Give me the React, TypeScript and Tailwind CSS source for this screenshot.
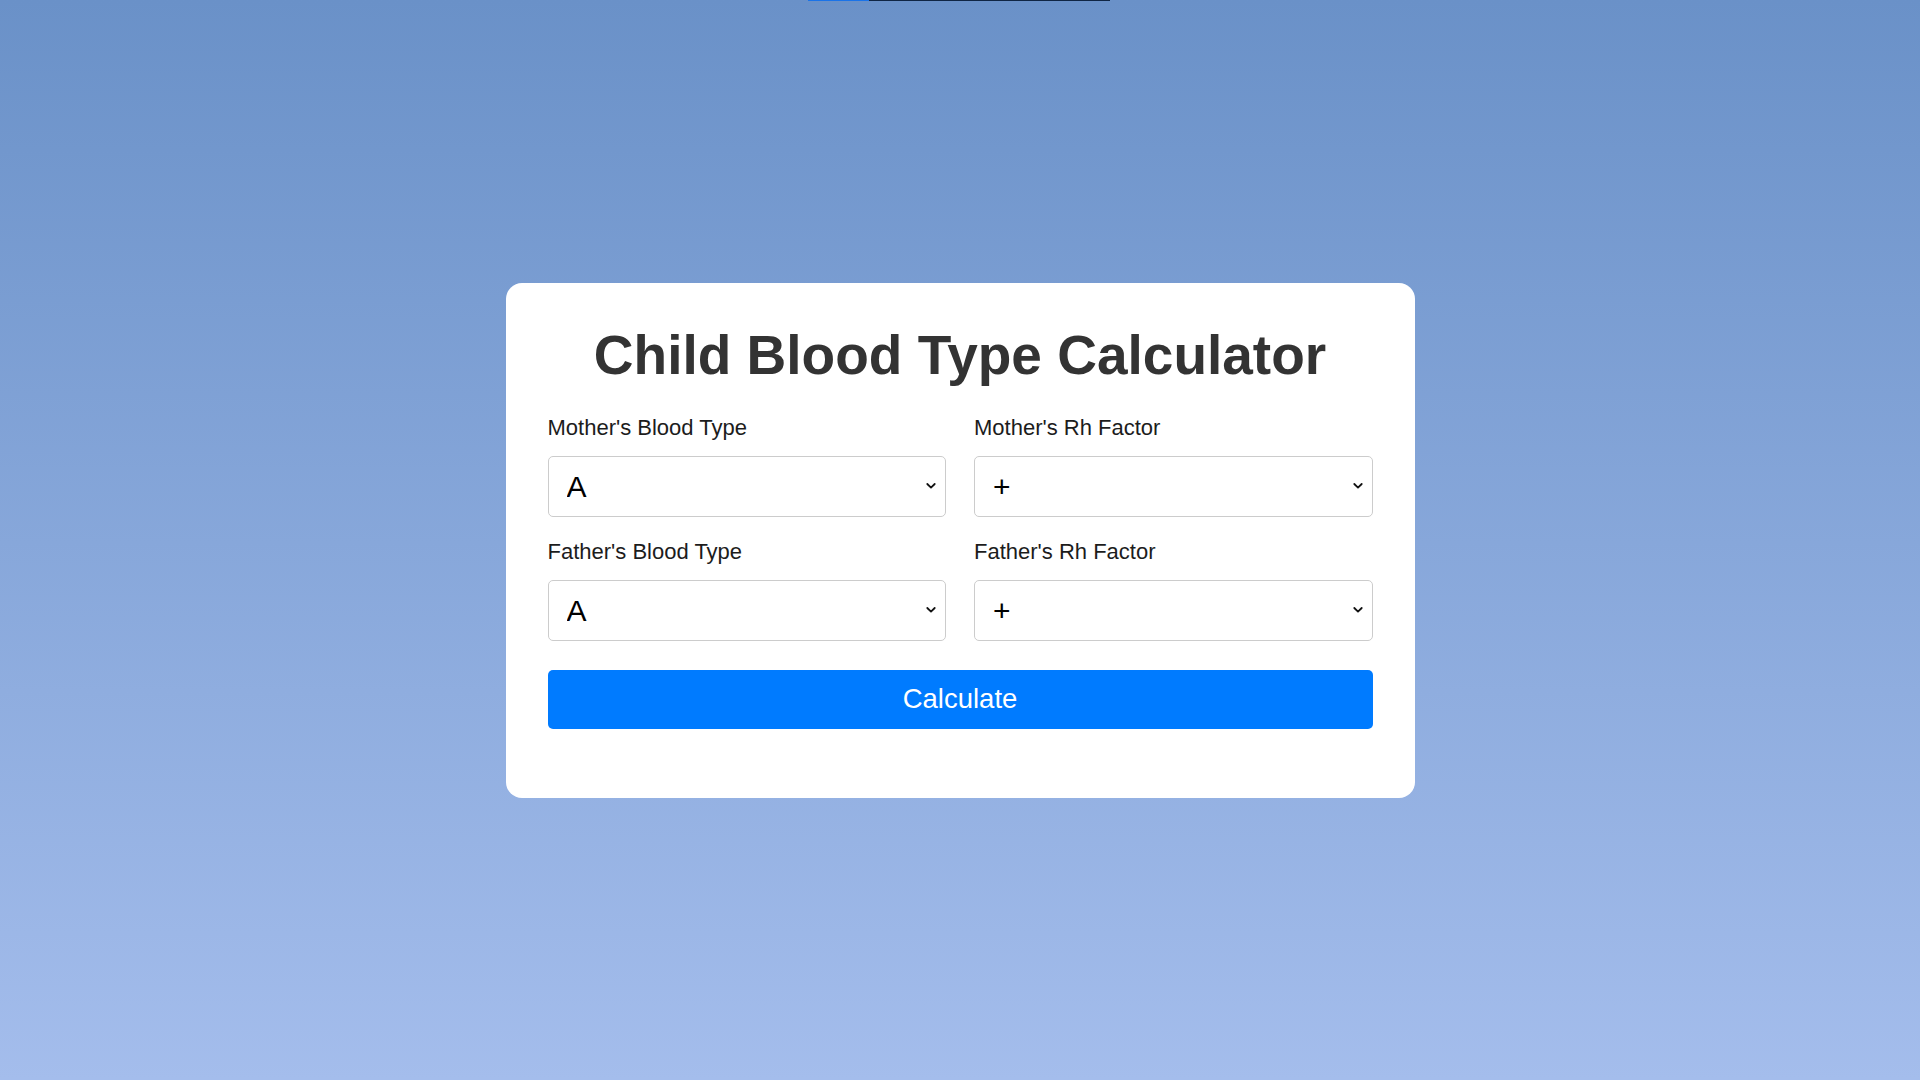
import React from "react";

function Chevron() {
  return (
    <svg
      className="pointer-events-none absolute right-[10px] top-1/2 -translate-y-1/2"
      width="10"
      height="7"
      viewBox="0 0 10 7"
      fill="none"
    >
      <path d="M1.3 1.5 L5 5.1 L8.7 1.5" stroke="#111" strokeWidth="1.8" strokeLinecap="round" strokeLinejoin="round" />
    </svg>
  );
}

function Field({ label, options }: { label: string; options: string[] }) {
  return (
    <div className="flex flex-col">
      <label className="text-[22px] leading-[25px] text-[#1c1c1c]">{label}</label>
      <div className="relative mt-[16px]">
        <select className="h-[61px] w-full appearance-none rounded-[5px] border border-[#cccccc] bg-white pl-[18px] pr-[30px] text-[30px] text-black outline-none [font-family:'Liberation_Sans',Arial,sans-serif]">
          {options.map((o) => (
            <option key={o}>{o}</option>
          ))}
        </select>
        <Chevron />
      </div>
    </div>
  );
}

export default function App() {
  const types = ["A", "B", "AB", "O"];
  const rh = ["+", "-"];
  return (
    <div className="relative flex min-h-screen items-center justify-center bg-gradient-to-b from-[#6a91c8] to-[#a4bdec] [font-family:'Liberation_Sans',Arial,sans-serif]">
      <div className="absolute left-[808px] top-0 flex h-px w-[302px]">
        <div className="h-full w-[61px] bg-[#1a73e8]" />
        <div className="h-full flex-1 bg-[#0f2544]" />
      </div>
      <div className="w-[909px] rounded-[16px] bg-white px-[42px] pb-[69px] pt-[40px]">
        <h1 className="text-center text-[55px] font-bold leading-[64px] text-[#333333]">
          Child Blood Type Calculator
        </h1>
        <div className="mt-[28px] grid grid-cols-2 gap-x-[28px] gap-y-[22px]">
          <Field label="Mother's Blood Type" options={types} />
          <Field label="Mother's Rh Factor" options={rh} />
          <Field label="Father's Blood Type" options={types} />
          <Field label="Father's Rh Factor" options={rh} />
        </div>
        <button className="mt-[29px] flex h-[59px] w-full items-center justify-center rounded-[5px] bg-[#007bff] text-[27.5px] text-white">
          Calculate
        </button>
      </div>
    </div>
  );
}
